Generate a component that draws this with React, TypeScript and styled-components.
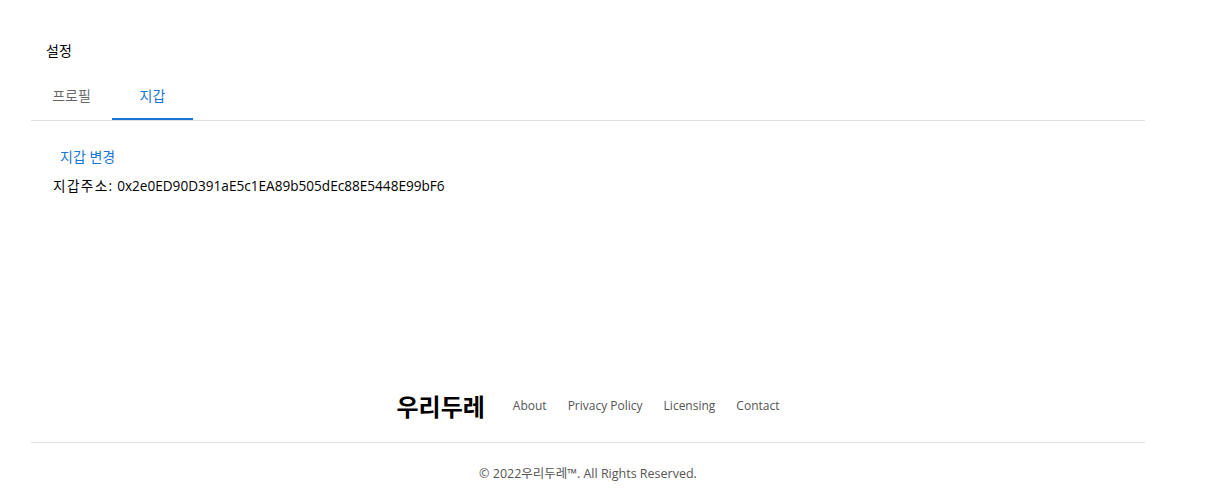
import React from "react";
import styled, { createGlobalStyle } from "styled-components";

const Global = createGlobalStyle`
  html, body { margin: 0; padding: 0; background: #fff; }
  body { font-family: "Open Sans", "Noto Sans CJK KR", sans-serif; color: rgba(0,0,0,0.87); }
`;

const Page = styled.div`
  width: 1216px;
  height: 501px;
  display: flex;
  flex-direction: column;
`;

const Main = styled.main`
  margin-left: 31px;
  width: 1114px;
  flex: 1;
`;

const Title = styled.h2`
  margin: 0;
  padding: 41px 0 0 15px;
  height: 31px;
  font-size: 14px;
  font-weight: 400;
  line-height: 20px;
  color: #000;
`;

const TabBar = styled.div`
  display: flex;
  border-bottom: 1px solid #e0e0e0;
  height: 48px;
`;

const Tab = styled.button<{ $active?: boolean }>`
  width: 81px;
  height: 48px;
  border: none;
  background: none;
  padding: 0;
  font-family: inherit;
  font-size: 14px;
  color: ${(p) => (p.$active ? "#1976d2" : "rgba(0,0,0,0.6)")};
  border-bottom: 2px solid ${(p) => (p.$active ? "#1976d2" : "transparent")};
`;

const Panel = styled.div`
  padding: 20px 0 0 22px;
  display: flex;
  flex-direction: column;
  align-items: flex-start;
`;

const TextButton = styled.button`
  border: none;
  background: none;
  font-family: inherit;
  font-size: 14px;
  color: #1976d2;
  padding: 6px 7px;
  line-height: 20px;
`;

const Address = styled.div`
  font-size: 13.6px;
  line-height: 20px;
  color: #000;
  margin-top: 3px;
`;

const AddressLabel = styled.span`
  letter-spacing: 1.4px;
`;

const Footer = styled.footer`
  margin-left: 31px;
  width: 1114px;
  display: flex;
  flex-direction: column;
  align-items: center;
`;

const FooterTop = styled.div`
  display: flex;
  align-items: center;
  height: 62px;
  width: 100%;
  justify-content: center;
  border-bottom: 1px solid #e0e0e0;
  padding-bottom: 12px;
  box-sizing: border-box;
`;

const Logo = styled.div`
  font-size: 24px;
  font-weight: 700;
  color: #000;
  margin-right: 7px;
`;

const FooterLink = styled.a`
  font-size: 12px;
  color: #555;
  margin-left: 21px;
  text-decoration: none;
`;

const Copy = styled.div`
  height: 58px;
  display: flex;
  align-items: center;
  font-size: 12.5px;
  color: #555;
`;

export default function App() {
  return (
    <Page>
      <Global />
      <Main>
        <Title>설정</Title>
        <TabBar>
          <Tab>프로필</Tab>
          <Tab $active>지갑</Tab>
        </TabBar>
        <Panel>
          <TextButton>지갑 변경</TextButton>
          <Address>
            <AddressLabel>지갑주소:</AddressLabel> 0x2e0ED90D391aE5c1EA89b505dEc88E5448E99bF6
          </Address>
        </Panel>
      </Main>
      <Footer>
        <FooterTop>
          <Logo>우리두레</Logo>
          <FooterLink>About</FooterLink>
          <FooterLink>Privacy Policy</FooterLink>
          <FooterLink>Licensing</FooterLink>
          <FooterLink>Contact</FooterLink>
        </FooterTop>
        <Copy>© 2022우리두레™. All Rights Reserved.</Copy>
      </Footer>
    </Page>
  );
}
